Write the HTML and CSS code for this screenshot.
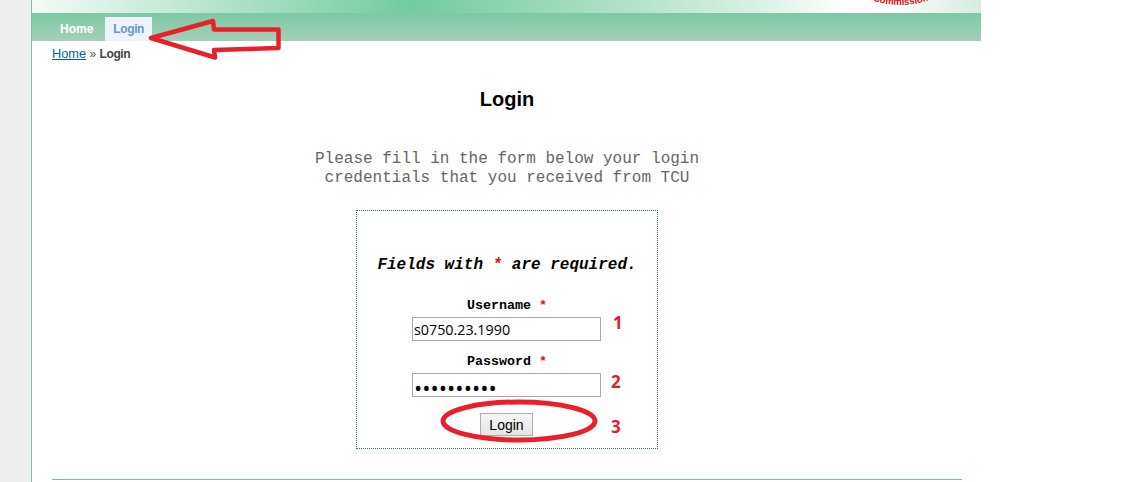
FILE: index.html
```html
<!DOCTYPE html>
<html lang="en">
<head>
    <meta charset="UTF-8">
    <meta name="viewport" content="width=device-width, initial-scale=1.0">
    <title>Login</title>
    <link rel="stylesheet" href="styles.css">
</head>
<body>
    <div class="rail"></div>
    <div class="page">
        <div class="banner">
            <svg class="seal" width="70" height="13" viewBox="0 0 70 13">
                <path id="sealArc" d="M0 -2 Q35 12 70 -2" fill="none"/>
                <text class="seal-text"><textPath href="#sealArc" startOffset="8">Commission</textPath></text>
            </svg>
        </div>

        <div class="mainmenu">
            <a class="menu-item" href="#">Home</a>
            <a class="menu-item active" href="#">Login</a>
        </div>

        <div class="breadcrumbs"><a href="#">Home</a> <span class="sep">»</span> <strong>Login</strong></div>

        <div class="content">
            <h1>Login</h1>
            <p class="intro">Please fill in the form below your login<br>credentials that you received from TCU</p>

            <form class="login-form" onsubmit="return false">
                <p class="note">Fields with <span class="required">*</span> are required.</p>

                <div class="row">
                    <label for="username">Username <span class="required">*</span></label>
                    <input type="text" id="username" value="s0750.23.1990">
                </div>
                <div class="row">
                    <label for="password">Password <span class="required">*</span></label>
                    <input type="password" id="password" value="1234567890">
                </div>
                <button type="submit">Login</button>
            </form>
        </div>

        <div class="footer-line"></div>
    </div>

    <!-- red marks drawn over the screenshot -->
    <svg class="marks" width="1142" height="482" viewBox="0 0 1142 482">
        <path d="M151 38 L213 21 L214 29.5 L278.5 29.5 L278.5 48 L214 50 L215 57.5 Z" fill="none" stroke="#e8202a" stroke-width="4.5" stroke-linejoin="round"/>
        <ellipse cx="519" cy="421" rx="76" ry="19" fill="none" stroke="#e8202a" stroke-width="5"/>
        <text class="mark-num" x="613" y="329">1</text>
        <text class="mark-num" x="611" y="388">2</text>
        <text class="mark-num" x="611" y="433">3</text>
    </svg>
</body>
</html>
```

FILE: styles.css
```css
* {
    box-sizing: border-box;
}

html, body {
    height: 482px;
    overflow: hidden;
}

body {
    margin: 0;
    display: flex;
    background: #fff;
    font-family: "Liberation Sans", Arial, sans-serif;
    font-size: 12px;
    color: #000;
}

.rail {
    width: 31px;
    background: #eeeeee;
}

.page {
    width: 950px;
    border-left: 1px solid #74c69d;
    background: #fff;
}

.banner {
    height: 13px;
    overflow: hidden;
    display: flex;
    justify-content: flex-end;
    padding-right: 46px;
    background: linear-gradient(to right, #f4fbf7 0%, #72cb9f 40%, #aadfc3 60%, #d8f0e3 76%, #ffffff 86%, #ffffff 90%, #d6ecdf 100%);
}

.seal-text {
    font-size: 9.5px;
    font-weight: bold;
    fill: #e0101a;
}

.mainmenu {
    height: 28px;
    display: flex;
    align-items: flex-end;
    padding-left: 20px;
    gap: 4px;
    background: linear-gradient(to bottom, #7bc9a2, #a6cfba);
}

.menu-item {
    height: 24px;
    padding: 5px 8px 0;
    font-weight: bold;
    color: #fff;
    text-decoration: none;
}

.menu-item.active {
    width: 47px;
    background: #eef3fb;
    color: #6b95c9;
    letter-spacing: -0.4px;
}

.breadcrumbs {
    padding: 6px 20px 0;
    line-height: 14px;
    color: #444;
}

.breadcrumbs a {
    color: #06639a;
    font-size: 12.8px;
}

.breadcrumbs .sep {
    color: #555;
}

.breadcrumbs strong {
    letter-spacing: -0.4px;
}

.content {
    width: 910px;
    margin-left: 20px;
    text-align: center;
}

h1 {
    margin: 26px 0 0;
    font-size: 20px;
    line-height: 24px;
}

.intro {
    margin: 39px 0 0;
    font-family: "Liberation Mono", "Courier New", monospace;
    font-size: 16px;
    line-height: 19px;
    color: #666;
}

.login-form {
    width: 302px;
    height: 239px;
    margin: 22px auto 0;
    padding-top: 45px;
    border: 1px dotted #1d8a2c;
    font-family: "Liberation Mono", "Courier New", monospace;
}

.note {
    margin: 0 0 24px;
    font-size: 16px;
    line-height: 18px;
    font-weight: bold;
    font-style: italic;
}

.required {
    color: #e0101a;
}

.row {
    display: flex;
    flex-direction: column;
    align-items: center;
    margin-bottom: 13px;
}

label {
    font-size: 13.33px;
    line-height: 16px;
    font-weight: bold;
    margin-bottom: 3px;
}

input {
    width: 189px;
    height: 24px;
    margin-right: 1px;
    padding: 1px;
    border: 1px solid #a9a9a9;
    font-family: "Open Sans", sans-serif;
    font-size: 14.3px;
    color: #000;
}

input[type="password"] {
    padding: 3px 1px 0;
    font-size: 22px;
}

button {
    width: 53px;
    height: 23px;
    margin: 3px 1px 0 0;
    padding: 0;
    border: 1px solid #adadad;
    background: linear-gradient(to bottom, #f6f6f6, #e4e4e4);
    font-family: "Liberation Sans", Arial, sans-serif;
    font-size: 14px;
    color: #000;
}

.footer-line {
    width: 910px;
    height: 1px;
    margin: 30px 0 0 20px;
    background: #74c69d;
}

.marks {
    position: absolute;
    left: 0;
    top: 0;
}

.mark-num {
    font-family: "Open Sans", sans-serif;
    font-size: 17px;
    font-weight: bold;
    fill: #d8232f;
}
```
